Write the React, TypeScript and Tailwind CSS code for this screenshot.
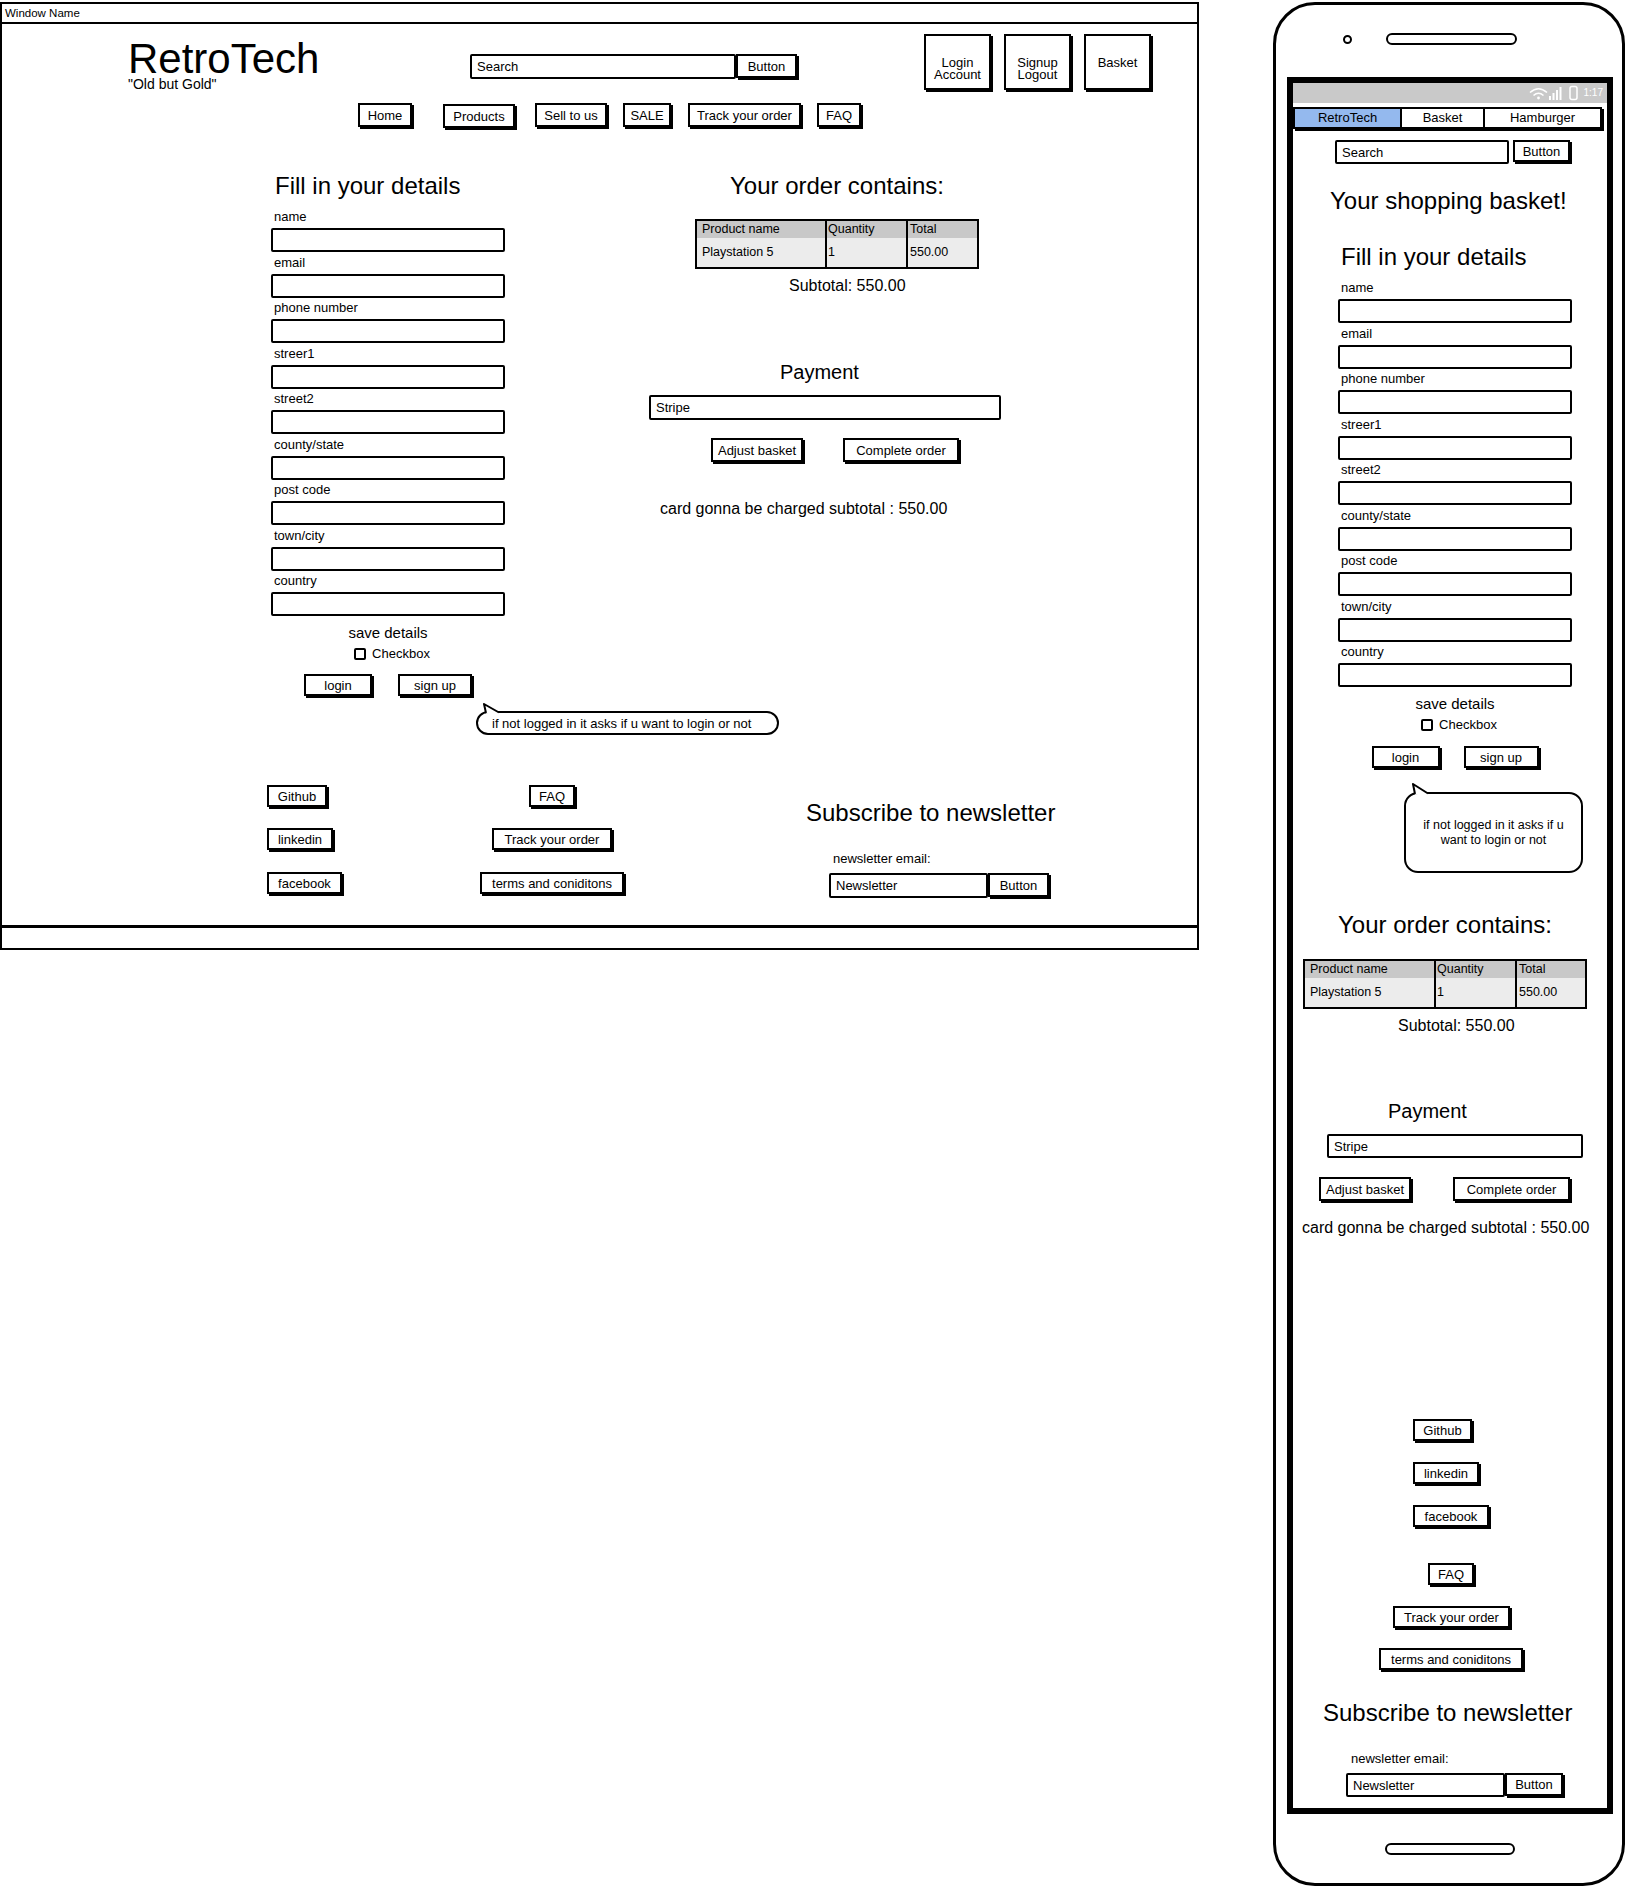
import React from "react";

type P = { className?: string; children?: React.ReactNode };

function Btn({ className = "", children }: P) {
  return (
    <div
      className={`flex shrink-0 items-center justify-center whitespace-nowrap border-2 border-black bg-white text-[13px] leading-none shadow-[2px_2px_0_0_#000] ${className}`}
    >
      {children}
    </div>
  );
}

function Inp({ className = "", children }: P) {
  return (
    <div
      className={`flex shrink-0 items-center whitespace-nowrap rounded-[2px] border-2 border-black bg-white pl-[5px] text-[13px] leading-none ${className}`}
    >
      {children}
    </div>
  );
}

const FIELDS = [
  "name",
  "email",
  "phone number",
  "streer1",
  "street2",
  "county/state",
  "post code",
  "town/city",
  "country",
];

function Fields() {
  return (
    <>
      {FIELDS.map((f, i) => (
        <div key={f} className={i === 0 ? "mt-[10px]" : "mt-[3.5px]"}>
          <div className="pl-[3px] text-[13px] leading-[14px]">{f}</div>
          <div className="mt-[4px] h-[24px] w-[234px] rounded-[2px] border-2 border-black" />
        </div>
      ))}
    </>
  );
}

function SaveBlock({ mobile }: { mobile?: boolean }) {
  return (
    <div className="w-[234px]">
      <div className="mt-[9px] text-center text-[15px] leading-[16px]">save details</div>
      <div className="mt-[5px] flex items-center justify-center gap-[6px] pl-[8px] text-[13px] leading-[16px]">
        <span className="h-[12px] w-[12px] rounded-[2px] border-2 border-black" />
        Checkbox
      </div>
      <div
        className={
          mobile
            ? "mt-[13px] flex justify-center gap-[24px]"
            : "mt-[12px] flex justify-center gap-[26px]"
        }
      >
        <Btn className="h-[22px] w-[68px]">login</Btn>
        <Btn className={mobile ? "h-[22px] w-[75px]" : "h-[22px] w-[74px]"}>sign up</Btn>
      </div>
    </div>
  );
}

function OrderTable({ className = "", c1 }: { className?: string; c1: string }) {
  return (
    <div className={`flex border-2 border-black text-[12.5px] ${className}`}>
      <div className={c1}>
        <div className="h-[17px] bg-[#c8c8c8] pl-[5px] leading-[17px]">Product name</div>
        <div className="h-[29px] bg-[#ececec] pl-[5px] leading-[29px]">Playstation 5</div>
      </div>
      <div className="w-[81px] border-l-2 border-black">
        <div className="h-[17px] bg-[#c8c8c8] pl-[1px] leading-[17px]">Quantity</div>
        <div className="h-[29px] bg-[#ececec] pl-[1px] leading-[29px]">1</div>
      </div>
      <div className="flex-1 border-l-2 border-black">
        <div className="h-[17px] bg-[#c8c8c8] pl-[2px] leading-[17px]">Total</div>
        <div className="h-[29px] bg-[#ececec] pl-[2px] leading-[29px]">550.00</div>
      </div>
    </div>
  );
}

function Desktop() {
  return (
    <div className="mt-[2px] flex h-[948px] w-[1199px] shrink-0 flex-col border-2 border-black">
      <div className="h-[20px] shrink-0 border-b-2 border-black pl-[3px] text-[11.5px] leading-[18px]">
        Window Name
      </div>
      <div className="flex-1">
        {/* header */}
        <div className="flex items-start pl-[126px]">
          <div className="mt-[17px] w-[342px]">
            <div className="text-[42px] leading-[36px]">RetroTech</div>
            <div className="text-[14px] leading-[14px]">"Old but Gold"</div>
          </div>
          <div className="mt-[30px] flex">
            <Inp className="h-[25px] w-[266px]">Search</Inp>
            <Btn className="h-[24px] w-[61px]">Button</Btn>
          </div>
          <div className="ml-[127px] mt-[10px] flex gap-[13px]">
            <div className="h-[56px] w-[67px] border-2 border-black pt-[21px] text-center text-[13px] leading-[12px] shadow-[2px_2px_0_0_#000]">
              Login
              <br />
              Account
            </div>
            <div className="h-[56px] w-[67px] border-2 border-black pt-[21px] text-center text-[13px] leading-[12px] shadow-[2px_2px_0_0_#000]">
              Signup
              <br />
              Logout
            </div>
            <div className="h-[56px] w-[67px] border-2 border-black pt-[21px] text-center text-[13px] leading-[12px] shadow-[2px_2px_0_0_#000]">
              Basket
            </div>
          </div>
        </div>
        {/* nav */}
        <div className="mt-[12px] flex pl-[356px]">
          <Btn className="h-[24px] w-[54px]">Home</Btn>
          <Btn className="ml-[31px] mt-[1px] h-[24px] w-[72px]">Products</Btn>
          <Btn className="ml-[20px] h-[24px] w-[72px]">Sell to us</Btn>
          <Btn className="ml-[16px] h-[24px] w-[48px]">SALE</Btn>
          <Btn className="ml-[17px] h-[24px] w-[113px]">Track your order</Btn>
          <Btn className="ml-[16px] h-[24px] w-[44px]">FAQ</Btn>
        </div>
        {/* main */}
        <div className="mt-[44px] flex items-start">
          <div className="ml-[269px] w-[236px]">
            <div className="pl-[4px] text-[24px] leading-[28px]">Fill in your details</div>
            <Fields />
            <SaveBlock />
            <div className="relative ml-[205px] mt-[7px] w-[303px] pt-[8px]">
              <div className="flex h-[24px] items-center whitespace-nowrap rounded-full border-2 border-black pl-[14px] text-[13px] leading-none">
                if not logged in it asks if u want to login or not
              </div>
              <svg className="absolute left-0 top-0" width="30" height="12" viewBox="0 0 30 12">
                <path d="M10 10.5 L8 1 L24 10.5 Z" fill="#fff" stroke="none" />
                <path d="M10 10 L8 1 L23 9.5" fill="none" stroke="#000" strokeWidth="2" strokeLinejoin="round" />
              </svg>
            </div>
          </div>
          <div className="ml-[141px] w-[352px]">
            <div className="whitespace-nowrap pl-[82px] text-[24px] leading-[28px]">Your order contains:</div>
            <OrderTable className="ml-[47px] mt-[19px] w-[284px]" c1="w-[128px]" />
            <div className="ml-[141px] mt-[8px] text-[16px] leading-[18px]">Subtotal: 550.00</div>
            <div className="ml-[132px] mt-[65px] text-[20px] leading-[24px]">Payment</div>
            <Inp className="ml-[1px] mt-[11px] h-[25px] w-[352px]">Stripe</Inp>
            <div className="mt-[18px] flex">
              <Btn className="ml-[63px] h-[24px] w-[92px]">Adjust basket</Btn>
              <Btn className="ml-[40px] h-[24px] w-[116px]">Complete order</Btn>
            </div>
            <div className="ml-[12px] mt-[38px] whitespace-nowrap text-[16px] leading-[18px]">
              card gonna be charged subtotal : 550.00
            </div>
          </div>
        </div>
        {/* footer */}
        <div className="mt-[50px] flex items-start">
          <div className="ml-[265px] flex w-[180px] flex-col items-start">
            <Btn className="h-[22px] w-[60px]">Github</Btn>
            <Btn className="mt-[21px] h-[22px] w-[66px]">linkedin</Btn>
            <Btn className="mt-[22px] h-[22px] w-[75px]">facebook</Btn>
          </div>
          <div className="flex w-[210px] flex-col items-center">
            <Btn className="h-[22px] w-[46px]">FAQ</Btn>
            <Btn className="mt-[21px] h-[22px] w-[120px]">Track your order</Btn>
            <Btn className="mt-[22px] h-[22px] w-[144px]">terms and coniditons</Btn>
          </div>
          <div className="ml-[149px] mt-[14px]">
            <div className="whitespace-nowrap text-[24px] leading-[28px]">Subscribe to newsletter</div>
            <div className="ml-[27px] mt-[25px] text-[13px] leading-[14px]">newsletter email:</div>
            <div className="ml-[23px] mt-[7px] flex">
              <Inp className="h-[25px] w-[159px]">Newsletter</Inp>
              <Btn className="h-[24px] w-[61px]">Button</Btn>
            </div>
          </div>
        </div>
      </div>
      <div className="h-[23px] shrink-0 border-t-[3px] border-black" />
    </div>
  );
}

function Phone() {
  return (
    <div className="ml-[74px] mt-[2px] flex h-[1884px] w-[352px] shrink-0 flex-col rounded-[42px] border-[3px] border-black">
      <div className="ml-[67px] mt-[28px] flex h-[12px] items-center">
        <div className="h-[9px] w-[9px] rounded-full border-[2.5px] border-black" />
        <div className="ml-[34px] h-[12px] w-[131px] rounded-full border-[2.5px] border-black" />
      </div>
      <div className="ml-[11px] mt-[32px] flex h-[1737px] w-[326px] shrink-0 flex-col border-[6px] border-black">
        {/* status bar */}
        <div className="flex h-[20px] shrink-0 items-center justify-end bg-[#c9c9c9] pr-[4px]">
          <svg width="52" height="20" viewBox="0 0 52 20">
            <path d="M3 9.5 Q11.5 2 20 9.5" fill="none" stroke="#fff" strokeWidth="1.6" />
            <path d="M6.5 12.5 Q11.5 8 16.5 12.5" fill="none" stroke="#fff" strokeWidth="1.6" />
            <circle cx="11.5" cy="15" r="1.4" fill="#fff" />
            <rect x="22" y="13" width="2" height="4" fill="#fff" />
            <rect x="25.5" y="10" width="2" height="7" fill="#fff" />
            <rect x="29" y="7" width="2" height="10" fill="#fff" />
            <rect x="32.5" y="4" width="2" height="13" fill="#fff" />
            <rect x="43" y="3.5" width="7" height="13" rx="2" fill="none" stroke="#fff" strokeWidth="1.5" />
          </svg>
          <span className="ml-[5px] text-[10px] leading-none text-white">1:17</span>
        </div>
        {/* tab bar */}
        <div className="mt-[4px] flex h-[22px] w-[309px] shrink-0 border-2 border-black text-[13px] shadow-[2px_2px_0_0_#000]">
          <div className="flex w-[107px] items-center justify-center border-r-2 border-black bg-[#94b9ee]">
            RetroTech
          </div>
          <div className="flex w-[83px] items-center justify-center border-r-2 border-black">Basket</div>
          <div className="flex flex-1 items-center justify-center">Hamburger</div>
        </div>
        <div className="ml-[42px] mt-[11px] flex">
          <Inp className="h-[24px] w-[174px]">Search</Inp>
          <Btn className="ml-[4px] h-[22px] w-[57px]">Button</Btn>
        </div>
        <div className="ml-[37px] mt-[23px] whitespace-nowrap text-[24px] leading-[28px]">Your shopping basket!</div>
        <div className="ml-[48px] mt-[28px] text-[24px] leading-[28px]">Fill in your details</div>
        <div className="ml-[45px]">
          <Fields />
          <SaveBlock mobile />
          <div className="relative ml-[66px] mt-[15px] w-[179px] pt-[9px]">
            <div className="flex h-[81px] items-center justify-center rounded-[14px] border-2 border-black text-center text-[12.5px] leading-[15px]">
              if not logged in it asks if u
              <br />
              want to login or not
            </div>
            <svg className="absolute left-0 top-0" width="30" height="13" viewBox="0 0 30 13">
              <path d="M11 11.5 L9 1 L25 11.5 Z" fill="#fff" stroke="none" />
              <path d="M11 11 L9 1 L24 10.5" fill="none" stroke="#000" strokeWidth="2" strokeLinejoin="round" />
            </svg>
          </div>
        </div>
        <div className="ml-[45px] mt-[38px] whitespace-nowrap text-[24px] leading-[28px]">Your order contains:</div>
        <OrderTable className="ml-[10px] mt-[20px] w-[284px]" c1="w-[129px]" />
        <div className="ml-[105px] mt-[8px] text-[16px] leading-[18px]">Subtotal: 550.00</div>
        <div className="ml-[95px] mt-[64px] text-[20px] leading-[24px]">Payment</div>
        <Inp className="ml-[34px] mt-[11px] h-[24px] w-[256px]">Stripe</Inp>
        <div className="mt-[19px] flex">
          <Btn className="ml-[26px] h-[24px] w-[92px]">Adjust basket</Btn>
          <Btn className="ml-[42px] h-[24px] w-[117px]">Complete order</Btn>
        </div>
        <div className="ml-[9px] mt-[18px] whitespace-nowrap text-[16px] leading-[18px]">
          card gonna be charged subtotal : 550.00
        </div>
        <Btn className="ml-[120px] mt-[182px] h-[22px] w-[59px]">Github</Btn>
        <Btn className="ml-[120px] mt-[21px] h-[22px] w-[66px]">linkedin</Btn>
        <Btn className="ml-[120px] mt-[21px] h-[22px] w-[76px]">facebook</Btn>
        <Btn className="ml-[135px] mt-[36px] h-[22px] w-[46px]">FAQ</Btn>
        <Btn className="ml-[100px] mt-[21px] h-[22px] w-[117px]">Track your order</Btn>
        <Btn className="ml-[86px] mt-[20px] h-[22px] w-[144px]">terms and coniditons</Btn>
        <div className="ml-[30px] mt-[29px] whitespace-nowrap text-[24px] leading-[28px]">Subscribe to newsletter</div>
        <div className="ml-[58px] mt-[25px] text-[13px] leading-[14px]">newsletter email:</div>
        <div className="ml-[53px] mt-[7px] flex">
          <Inp className="h-[24px] w-[159px]">Newsletter</Inp>
          <Btn className="h-[23px] w-[58px]">Button</Btn>
        </div>
      </div>
      <div className="ml-[109px] mt-[29px] h-[12px] w-[130px] rounded-full border-[2.5px] border-black" />
    </div>
  );
}

export default function App() {
  return (
    <div className="flex h-[1888px] w-[1627px] items-start bg-white font-['Liberation_Sans',Arial,sans-serif] text-black">
      <Desktop />
      <Phone />
    </div>
  );
}
